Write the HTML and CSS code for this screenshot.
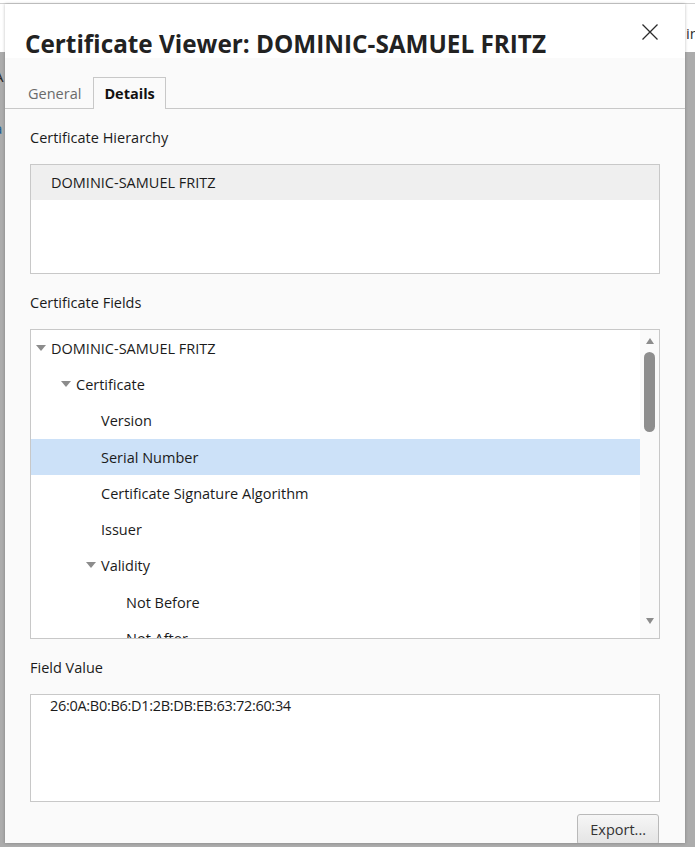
FILE: index.html
```html
<!DOCTYPE html>
<html lang="en">
<head>
    <meta charset="UTF-8">
    <meta name="viewport" content="width=device-width, initial-scale=1.0">
    <title>Certificate Viewer</title>
    <link rel="stylesheet" href="styles.css">
</head>
<body>
    <!-- page behind the modal -->
    <div class="page">
        <div class="page-top">
            <span class="page-top-text">in</span>
        </div>
        <div class="page-dim">
            <div class="dim-line dim-a">A</div>
            <div class="dim-line dim-link">a</div>
        </div>
    </div>

    <div class="dialog">
        <div class="dialog-header">
            <h1>Certificate Viewer: DOMINIC-SAMUEL FRITZ</h1>
            <button class="close-btn" aria-label="Close">
                <svg width="16" height="16" viewBox="0 0 16 16">
                    <path d="M0.5 0.5 L15.5 15.5 M15.5 0.5 L0.5 15.5" stroke="#2b2b2b" stroke-width="1.3" fill="none"/>
                </svg>
            </button>
        </div>
        <div class="dialog-body">
            <div class="tabs">
                <div class="tab">General</div>
                <div class="tab active">Details</div>
            </div>
            <div class="content">
                <div class="label">Certificate Hierarchy</div>
                <div class="box hierarchy">
                    <div class="hier-row selected">DOMINIC-SAMUEL FRITZ</div>
                </div>

                <div class="label">Certificate Fields</div>
                <div class="box fields">
                    <ul class="tree" id="tree"></ul>
                    <div class="scrollbar">
                        <span class="arrow-up"></span>
                        <span class="thumb"></span>
                        <span class="arrow-down"></span>
                    </div>
                </div>

                <div class="label">Field Value</div>
                <div class="box value">26:0A:B0:B6:D1:2B:DB:EB:63:72:60:34</div>

                <div class="actions">
                    <button class="btn">Export...</button>
                </div>
            </div>
        </div>
    </div>

    <script>
        // Certificate field tree, flattened with depth
        const fields = [
            { name: 'DOMINIC-SAMUEL FRITZ', depth: 0, open: true },
            { name: 'Certificate', depth: 1, open: true },
            { name: 'Version', depth: 2 },
            { name: 'Serial Number', depth: 2, selected: true },
            { name: 'Certificate Signature Algorithm', depth: 2 },
            { name: 'Issuer', depth: 2 },
            { name: 'Validity', depth: 2, open: true },
            { name: 'Not Before', depth: 3 },
            { name: 'Not After', depth: 3 },
            { name: 'Subject', depth: 2 }
        ];

        const tree = document.getElementById('tree');
        tree.innerHTML = fields.map(f => `
            <li class="tree-row${f.selected ? ' selected' : ''}" style="padding-left: ${5 + f.depth * 25}px">
                <span class="twisty${f.open ? ' open' : ''}"></span>${f.name}
            </li>`).join('');
    </script>
</body>
</html>
```

FILE: styles.css
```css
body, html {
    margin: 0;
    padding: 0;
    height: 100%;
    overflow: hidden;
    font-family: "Open Sans", "Noto Sans", sans-serif;
    color: #1b1b1b;
}
.page {
    height: 100%;
    display: flex;
    flex-direction: column;
}
.page-top {
    height: 48px;
    margin-top: 3px;
    border-top: 1px solid #d0d0d0;
    background: #fff;
    display: flex;
    justify-content: flex-end;
    align-items: flex-start;
}
.page-top-text {
    font-size: 15px;
    line-height: 18px;
    margin-top: 20px;
    margin-right: -4px;
    color: #333;
}
.page-dim {
    flex-grow: 1;
    background: #acacac;
    padding-top: 14px;
}
.dim-line {
    font-size: 15px;
    line-height: 20px;
    margin-left: -6px;
}
.dim-a {
    color: #2a2a2a;
}
.dim-link {
    margin-top: 32px;
    color: #1d5f94;
}

/* modal */
.dialog {
    position: absolute;
    left: 5px;
    top: 4px;
    width: 680px;
    height: 839px;
    background: #fafafa;
    box-shadow: 0 0 3px rgba(0, 0, 0, 0.25);
    overflow: hidden;
    display: flex;
    flex-direction: column;
}
.dialog-header {
    height: 54px;
    background: #fff;
    display: flex;
    align-items: center;
    justify-content: space-between;
    padding: 0 27px 0 20px;
    flex-shrink: 0;
}
.dialog-header h1 {
    margin: 0;
    padding-top: 24px;
    font-size: 24.3px;
    font-weight: 700;
    color: #222;
}
.close-btn {
    border: none;
    background: none;
    padding: 0;
    margin-top: 1px;
    width: 16px;
    height: 16px;
}
.close-btn svg {
    display: block;
}
.tabs {
    display: flex;
    margin-top: 19px;
    padding-left: 11px;
    border-bottom: 1px solid #c8c8c8;
}
.tab {
    padding: 0 11px;
    height: 30px;
    line-height: 31px;
    font-size: 14.5px;
    color: #6b6b6b;
    border: 1px solid transparent;
    border-bottom: none;
    margin-bottom: -1px;
}
.tab.active {
    font-weight: 700;
    color: #111;
    border-color: #c8c8c8;
    background: #fafafa;
    padding: 0 10px 1px;
}
.content {
    padding: 0 25px;
}
.label {
    font-size: 14.5px;
    line-height: 20px;
    margin-top: 19px;
    margin-bottom: 16px;
}
.box {
    border: 1px solid #c8c8c8;
    background: #fff;
}
.hierarchy {
    height: 108px;
}
.hier-row {
    height: 35px;
    line-height: 35px;
    padding-left: 20px;
    font-size: 14.5px;
}
.hier-row.selected {
    background: #efefef;
}
.fields {
    height: 308px;
    display: flex;
    overflow: hidden;
}
.tree {
    list-style-type: none;
    margin: 0;
    padding: 0;
    flex-grow: 1;
}
.tree-row {
    height: 36.3px;
    font-size: 14.5px;
    display: flex;
    align-items: center;
    white-space: nowrap;
}
.tree-row.selected {
    background: #cce1f8;
}
.twisty {
    width: 15px;
    flex-shrink: 0;
}
.twisty.open::before {
    content: "";
    display: block;
    width: 0;
    height: 0;
    border-left: 5px solid transparent;
    border-right: 5px solid transparent;
    border-top: 6px solid #8c8c8c;
    margin-top: -1px;
}
.scrollbar {
    width: 19px;
    flex-shrink: 0;
    background: #fafafa;
    display: flex;
    flex-direction: column;
    align-items: center;
    padding-top: 8px;
}
.arrow-up, .arrow-down {
    width: 0;
    height: 0;
    border-left: 4px solid transparent;
    border-right: 4px solid transparent;
}
.arrow-up {
    border-bottom: 6px solid #8c8c8c;
}
.arrow-down {
    border-top: 6px solid #8c8c8c;
    margin-top: 186px;
}
.thumb {
    width: 11px;
    height: 80px;
    margin-top: 8px;
    border-radius: 6px;
    background: #8e8e8e;
}
.value {
    height: 86px;
    padding: 1px 0 19px 19px;
    font-size: 14.5px;
    line-height: 20px;
    letter-spacing: -0.3px;
}
.actions {
    display: flex;
    justify-content: flex-end;
    margin-top: 12px;
    margin-right: 1px;
}
.btn {
    font-family: inherit;
    font-size: 14.5px;
    color: #333;
    height: 31px;
    padding: 0 12px;
    border: 1px solid #b9b9b9;
    border-radius: 3px;
    background: linear-gradient(#f6f6f6, #e4e4e4);
}
```
